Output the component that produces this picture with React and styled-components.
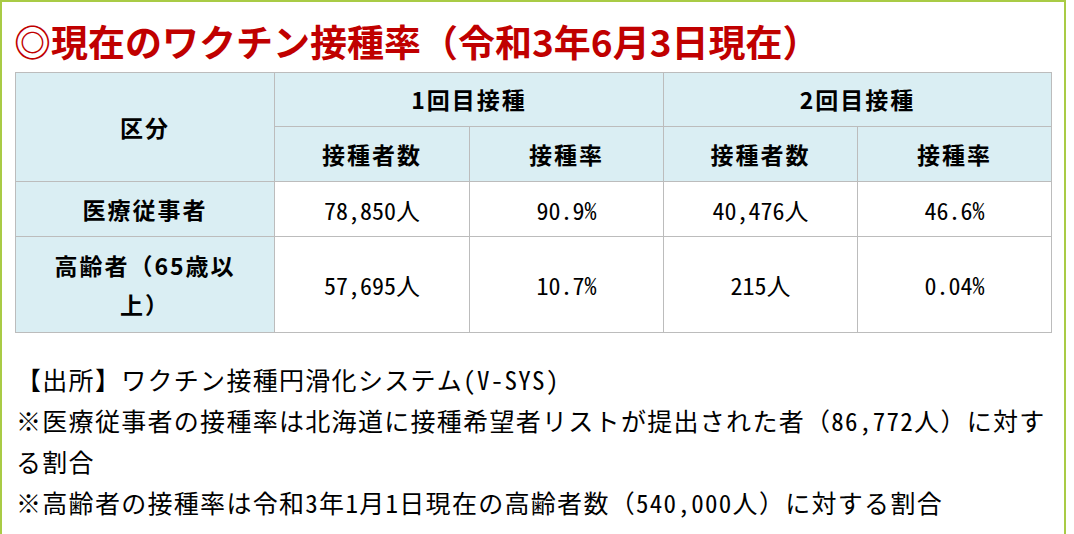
import React from "react";
import styled, { createGlobalStyle } from "styled-components";

const Global = createGlobalStyle`
  html, body { margin: 0; padding: 0; background: #fff; }
  body {
    font-family: "Noto Sans CJK JP", "Noto Sans", sans-serif;
    color: #000;
    text-spacing-trim: space-all;
  }
`;

const Frame = styled.div`
  width: 1066px;
  box-sizing: border-box;
  min-height: 534px;
  border-top: 2px solid #a9cb45;
  border-left: 2px solid #a9cb45;
  border-right: 2px solid #a9cb45;
  padding: 18px 13px 0 13px;
`;

const Title = styled.h2`
  margin: 0 0 9px -1px;
  font-size: 37px;
  line-height: 43px;
  font-weight: 700;
  color: #c00000;
  font-family: "Noto Sans CJK JP", sans-serif;
  white-space: nowrap;
  text-spacing-trim: space-all;
`;

const Table = styled.table`
  width: 1036px;
  border-collapse: collapse;
  table-layout: fixed;
`;

const Row = styled.tr`
  height: ${(p) => p.$h}px;
`;

const Head = styled.th`
  background: #daeef3;
  border: 1px solid #bcbcbc;
  font-size: 23px;
  font-weight: 700;
  letter-spacing: 2px;
  text-align: center;
  padding: 0;
  line-height: 39px;
  font-family: "Noto Sans CJK JP", sans-serif;
`;

const Label = styled(Head)`
  padding: 0 34px;
`;

const Cell = styled.td`
  border: 1px solid #bcbcbc;
  text-align: center;
  font-size: 24px;
  font-weight: 400;
  padding: 0;
  font-family: "Noto Sans Mono CJK JP", "Noto Sans CJK JP", monospace;
`;

const Notes = styled.div`
  margin-top: 26px;
  padding-left: 1px;
`;

const Note = styled.p`
  margin: 0;
  font-size: 25px;
  line-height: 41px;
  letter-spacing: 1.3px;
  font-family: "Noto Sans Mono CJK JP", "Noto Sans CJK JP", monospace;
  white-space: nowrap;
  text-spacing-trim: space-all;
`;

const rows = [
  { label: "医療従事者", h: 55, v: ["78,850人", "90.9%", "40,476人", "46.6%"] },
  { label: "高齢者（65歳以上）", h: 96, v: ["57,695人", "10.7%", "215人", "0.04%"] },
];

export default function App() {
  return (
    <>
      <Global />
      <Frame>
        <Title>◎現在のワクチン接種率（令和3年6月3日現在）</Title>
        <Table>
          <colgroup>
            <col style={{ width: 259 }} />
            <col style={{ width: 195 }} />
            <col style={{ width: 194 }} />
            <col style={{ width: 194 }} />
            <col style={{ width: 194 }} />
          </colgroup>
          <thead>
            <Row $h={54}>
              <Head rowSpan={2}>区分</Head>
              <Head colSpan={2}>1回目接種</Head>
              <Head colSpan={2}>2回目接種</Head>
            </Row>
            <Row $h={55}>
              <Head>接種者数</Head>
              <Head>接種率</Head>
              <Head>接種者数</Head>
              <Head>接種率</Head>
            </Row>
          </thead>
          <tbody>
            {rows.map((r) => (
              <Row key={r.label} $h={r.h}>
                <Label>{r.label}</Label>
                {r.v.map((x, i) => (
                  <Cell key={i}>{x}</Cell>
                ))}
              </Row>
            ))}
          </tbody>
        </Table>
        <Notes>
          <Note>【出所】ワクチン接種円滑化システム(V-SYS)</Note>
          <Note>※医療従事者の接種率は北海道に接種希望者リストが提出された者（86,772人）に対す</Note>
          <Note>る割合</Note>
          <Note>※高齢者の接種率は令和3年1月1日現在の高齢者数（540,000人）に対する割合</Note>
        </Notes>
      </Frame>
    </>
  );
}
